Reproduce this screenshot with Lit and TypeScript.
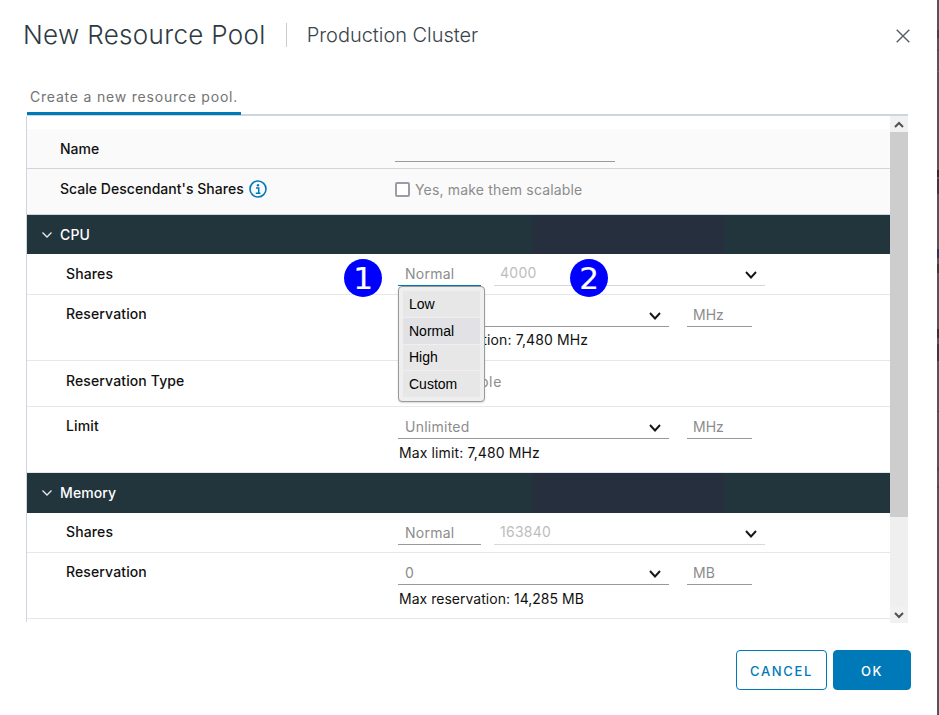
import { LitElement, html, css, svg } from "lit";
import { customElement } from "lit/decorators.js";

const chevron = (cls: string) => html`<svg class=${cls} viewBox="0 0 12 8" width="12" height="8" aria-hidden="true"><polyline points="1,1 6,6.5 11,1" fill="none" stroke="currentColor" stroke-width="1.9"/></svg>`;
const thinChevron = html`<svg class="thin" viewBox="0 0 10 6" width="10" height="6" aria-hidden="true"><polyline points="0.5,0.5 5,5 9.5,0.5" fill="none" stroke="currentColor" stroke-width="1.3"/></svg>`;

const field = (value: string, unit: string, help: string, helpCls = "") => html`
  <div class="stack">
    <div class="fields">
      <div class="field sel w271"><span>${value}</span>${chevron("chev")}</div>
      <div class="field w65 unit"><span>${unit}</span></div>
    </div>
    <div class="help ${helpCls}">${help}</div>
  </div>`;

const shares = (value: string, active: boolean) => html`
  <div class="fields g13">
    <div class="field w83 ${active ? "active" : ""}"><span>${value}</span></div>
    <div class="field w271 faint"><span>${active ? "4000" : "163840"}</span>${chevron("chev")}</div>
  </div>`;

const strip: [number, string][] = [
  [30, "#555"], [8, "#3f4348"], [12, "#555"], [1, "#444"], [20, "#555"], [1, "#666"], [98, "#555"],
  [7, "#332a28"], [2, "#555"], [16, "#3a3a3a"], [55, "#555"], [9, "#27365a"], [6, "#555"], [9, "#3a3a3a"],
  [56, "#555"], [9, "#3a3030"], [6, "#555"], [17, "#3a3a3a"], [50, "#555"], [1, "#444"], [55, "#555"],
  [4, "#4a4a4a"], [15, "#555"], [2, "#4a4a4a"], [228, "#555"],
];

@customElement("app-root")
export class AppRoot extends LitElement {
  static styles = css`
    :host { display: block; width: 939px; height: 715px; overflow: hidden; background: #fff; font-family: Inter, "Noto Sans", sans-serif; font-size: 14px; color: #111; letter-spacing: 0.12px; }
    .page { display: flex; height: 715px; }
    .dialog { width: 937px; flex: none; display: flex; flex-direction: column; position: relative; }
    .strip { width: 2px; display: flex; flex-direction: column; }
    .strip i { display: block; }

    .head { height: 70px; flex: none; display: flex; align-items: center; padding: 0 27px 0 23px; box-sizing: border-box; }
    h1 { margin: 0; font-size: 26px; font-weight: 300; color: #2e3a42; letter-spacing: 0.33px; line-height: 30px; }
    .sep { width: 1px; height: 24px; background: #ccc; margin: 0 20px; }
    h2 { margin: 0; font-size: 20px; font-weight: 300; color: #3a444b; letter-spacing: -0.03px; line-height: 30px; flex: 1; }
    .close { color: #565f66; display: block; margin-top: 2px; }

    .tabs { width: 881px; margin-left: 27px; height: 46px; flex: none; box-sizing: border-box; border-bottom: 2px solid #ccd6dc; display: flex; }
    .tab { width: 214px; height: 45px; box-sizing: border-box; padding: 18px 0 0 3px; border-bottom: 3px solid #0079b8; color: #737373; line-height: 18px; letter-spacing: 0.8px; }

    .body { margin-left: 26px; width: 882px; height: 507px; flex: none; display: flex; }
    .pane { width: 864px; height: 506px; box-sizing: border-box; border-left: 1px solid #ccd6dc; padding-top: 13px; overflow: hidden; }
    .bar { width: 18px; display: flex; flex-direction: column; background: #efefef; height: 507px; color: #505050; }
    .btn { height: 16px; flex: none; display: flex; align-items: center; justify-content: center; background: #f1f1f1; }
    .thumb { height: 385px; background: #cdcdcd; flex: none; }
    .track { flex: 1; }

    .row { display: flex; box-sizing: border-box; border-bottom: 1px solid #e2e8eb; padding-left: 39px; }
    .label { width: 332px; flex: none; line-height: 18px; padding-top: 10px; font-weight: 500; letter-spacing: 0.12px; }
    .l1 { padding-top: 11px; }
    .top { background: #fafafa; padding-left: 33px; border-bottom-color: #ccd6dc; }
    .top .label { width: 335px; display: flex; gap: 5px; align-items: center; height: 18px; letter-spacing: 0.03px; }
    .name { height: 40px; }
    .name .label { padding-top: 11px; }
    .name .input { width: 220px; height: 33px; box-sizing: border-box; border-bottom: 1px solid #9a9a9a; }
    .scale { height: 46px; }
    .scale .label { padding-top: 11px; }
    .scale .check { padding-top: 11px; }
    .check { display: flex; gap: 5px; align-items: center; height: 18px; color: #8c8c8c; letter-spacing: 0.17px; }
    .box { width: 15px; height: 15px; box-sizing: border-box; border: 2px solid #9c9ca6; border-radius: 2px; background: #fff; }

    .sec { height: 39px; display: flex; align-items: center; gap: 8px; padding: 0 0 1px 15px; color: #fff; font-weight: 500; box-sizing: border-box;
      background: linear-gradient(to right, #22343c 0 505px, #262f3e 505px 697px, #22343c 697px); }
    .sec.mem { height: 40px; }
    .thin { color: #e8edf0; margin-top: 1px; }

    .ctl { padding-top: 8px; }
    .h41 { height: 41px; }
    .h40 { height: 40px; }
    .h66 { height: 66px; }
    .h46 { height: 46px; }
    .stack { display: flex; flex-direction: column; }
    .fields { display: flex; gap: 18px; }
    .g13 { gap: 13px; }
    .field { height: 24px; box-sizing: border-box; border-bottom: 1px solid #999; color: #8c8c8c; display: flex; align-items: center; justify-content: space-between; padding: 1px 8px 0 7px; line-height: 18px; letter-spacing: 0.25px; }
    .w83 { width: 83px; }
    .w271 { width: 271px; }
    .w65 { width: 65px; padding-left: 6px; letter-spacing: 0; }
    .faint { border-bottom-color: #d8d8d8; color: #bdbdbd; padding: 0 8px 1px 6px; }
    .active { border-bottom-color: #0079b8; }
    .chev { color: #151515; margin-top: 2px; }
    .faint .chev { margin-top: 3px; }
    .help { color: #111; margin-left: 1px; line-height: 18px; padding-top: 4px; }
    .d1 { padding-top: 5px; }
    .narrow { letter-spacing: 0.02px; }

    .check.exp { padding-top: 11px; letter-spacing: 0.65px; }

    .menu { position: absolute; left: 398px; top: 286px; width: 87px; height: 116px; box-sizing: border-box; background: #efefef; border: 1px solid #999; border-radius: 4px; padding: 4px; display: flex; flex-direction: column; gap: 1px; font-family: "Liberation Sans", Arial, sans-serif; color: #000; letter-spacing: 0; box-shadow: 0 1px 2px rgba(0,0,0,.15); }
    .menu div { height: 26px; flex: none; background: #e7e7e7; display: flex; align-items: center; padding-left: 6px; line-height: 16px; }
    .menu .cur { background: #e1e1e6; }
    .menu .short { height: 25px; padding-bottom: 1px; box-sizing: border-box; }

    .badge { position: absolute; top: 259px; width: 38px; height: 38px; border-radius: 50%; background: #0000ff; color: #fff; font-family: "DejaVu Sans", sans-serif; font-size: 31px; line-height: 38px; text-align: center; letter-spacing: 0; -webkit-text-stroke: 0.2px #fff; }
    .b1 { left: 344px; }
    .b2 { left: 570px; }

    .foot { flex: 1; display: flex; justify-content: flex-end; align-items: flex-start; gap: 6px; padding: 27px 26px 0 0; }
    .b { height: 40px; box-sizing: border-box; border-radius: 4px; padding-top: 2px; font: 500 13px Inter, sans-serif; letter-spacing: 1.65px; display: flex; align-items: center; justify-content: center; border: 1px solid #0079b8; }
    .cancel { width: 91px; color: #0079b8; background: #fff; }
    .ok { width: 78px; color: #fff; background: #0079b8; }
  `;

  render() {
    return html`<div class="page">
      <div class="dialog">
        <div class="head">
          <h1>New Resource Pool</h1><div class="sep"></div><h2>Production Cluster</h2>
          <svg class="close" width="14" height="14" viewBox="0 0 14 14" aria-hidden="true"><path d="M.7.7l12.6 12.6M13.3.7L.7 13.3" stroke="currentColor" stroke-width="1.4" fill="none"/></svg>
        </div>
        <div class="tabs"><div class="tab">Create a new resource pool.</div></div>
        <div class="body">
          <div class="pane">
            <div class="row top name"><div class="label">Name</div><div class="input"></div></div>
            <div class="row top scale">
              <div class="label">Scale Descendant's Shares
                <svg width="18" height="18" viewBox="0 0 18 18" aria-hidden="true">${svg`<circle cx="9" cy="9" r="8" fill="none" stroke="#0079b8" stroke-width="1.6"/><circle cx="9" cy="5.2" r="1.2" fill="#0079b8"/><path d="M7 7.9h2.7v5.2M6.8 13.3h4.6" fill="none" stroke="#0079b8" stroke-width="1.5"/>`}</svg>
              </div>
              <div class="check"><span class="box"></span><span>Yes, make them scalable</span></div>
            </div>
            <div class="sec">${thinChevron}<span>CPU</span></div>
            <div class="row h41"><div class="label l1">Shares</div><div class="ctl">${shares("Normal", true)}</div></div>
            <div class="row h66"><div class="label">Reservation</div><div class="ctl">${field("0", "MHz", "Max reservation: 7,480 MHz")}</div></div>
            <div class="row h46"><div class="label l1">Reservation Type</div><div class="check exp"><span class="box"></span><span>Expandable</span></div></div>
            <div class="row h66"><div class="label">Limit</div><div class="ctl">${field("Unlimited", "MHz", "Max limit: 7,480 MHz", "d1")}</div></div>
            <div class="sec mem">${thinChevron}<span>Memory</span></div>
            <div class="row h40"><div class="label">Shares</div><div class="ctl">${shares("Normal", false)}</div></div>
            <div class="row h66"><div class="label">Reservation</div><div class="ctl">${field("0", "MB", "Max reservation: 14,285 MB", "d1 narrow")}</div></div>
          </div>
          <div class="bar">
            <div class="btn"><svg width="10" height="7" viewBox="0 0 10 7" aria-hidden="true"><path d="M1 6l4-4 4 4" fill="none" stroke="currentColor" stroke-width="2"/></svg></div>
            <div class="thumb"></div>
            <div class="track"></div>
            <div class="btn"><svg width="10" height="7" viewBox="0 0 10 7" aria-hidden="true"><path d="M1 1l4 4 4-4" fill="none" stroke="currentColor" stroke-width="2"/></svg></div>
          </div>
        </div>
        <div class="foot">
          <div class="b cancel">CANCEL</div>
          <div class="b ok">OK</div>
        </div>
        <div class="badge b1">1</div>
        <div class="badge b2">2</div>
        <div class="menu"><div>Low</div><div class="cur">Normal</div><div class="short">High</div><div>Custom</div></div>
      </div>
      <div class="strip">${strip.map(([h, c]) => html`<i style="height:${h}px;background:${c}"></i>`)}</div>
    </div>`;
  }
}
